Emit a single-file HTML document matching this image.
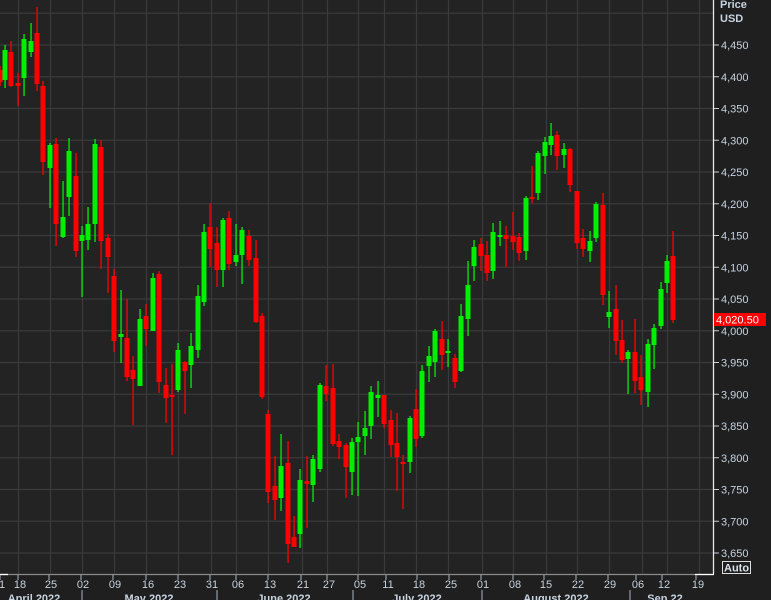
<!DOCTYPE html>
<html><head><meta charset="utf-8"><style>
html,body{margin:0;padding:0;background:#1f1f20;width:771px;height:600px;overflow:hidden;font-family:"Liberation Sans",sans-serif}
svg{display:block}
</style></head><body>
<svg id="s" width="771" height="600" xmlns="http://www.w3.org/2000/svg">
<rect x="0" y="0" width="713" height="574" fill="#232323"/>
<g id="grid"></g>
<g id="candles"></g>
<line x1="713.5" y1="0" x2="713.5" y2="574" stroke="#e8e8e8" stroke-width="1.3"/>
<line x1="0" y1="574.5" x2="713" y2="574.5" stroke="#8a8a8a" stroke-width="1.3"/>
<line x1="0" y1="574.5" x2="8" y2="574.5" stroke="#fff" stroke-width="1.3"/>
<line x1="695" y1="574.5" x2="714" y2="574.5" stroke="#fff" stroke-width="1.3"/>
<g id="axis" font-size="11" fill="#c6d2de"></g>
<text x="720" y="8" font-size="11" font-weight="bold" fill="#c6d2de">Price</text>
<text x="720" y="22" font-size="11" font-weight="bold" fill="#c6d2de">USD</text>
<rect x="714" y="313" width="52" height="13" fill="#ff0000"/>
<text x="716" y="323.5" font-size="11" fill="#fff">4,020.50</text>
<rect x="722.5" y="561.5" width="28" height="12" fill="none" stroke="#ddd" stroke-width="1"/>
<text x="724" y="571.5" font-size="11" font-weight="bold" fill="#d8e0e8">Auto</text>
</svg>
<script>
var NS="http://www.w3.org/2000/svg";
function el(p,t,a,txt){var e=document.createElementNS(NS,t);for(var k in a)e.setAttribute(k,a[k]);if(txt!=null)e.textContent=txt;p.appendChild(e);return e;}
var g=document.getElementById('grid'),ax=document.getElementById('axis'),cg=document.getElementById('candles');
var vx=[18,50,82,114,146,178,211,236,268,302,327,358,384,416,448,482,513,546,577,609,642,667,699];
vx.forEach(function(x){el(g,'line',{x1:x+.5,y1:0,x2:x+.5,y2:574,stroke:'#3a3a3a','stroke-width':1.2});});
var labs=['4,500','4,450','4,400','4,350','4,300','4,250','4,200','4,150','4,100','4,050','4,000','3,950','3,900','3,850','3,800','3,750','3,700','3,650'];
for(var k=-1;k<=16;k++){var y=45+k*31.75;el(g,'line',{x1:0,y1:y,x2:713,y2:y,stroke:'#3a3a3a','stroke-width':1.2});
 if(k>=0){el(ax,'line',{x1:714,y1:y,x2:719,y2:y,stroke:'#c6d2de'});el(ax,'text',{x:721,y:y+4},labs[k+1]);}}
var d=[[0,70,82,66,86,0],[5,50,80,45,88,1],[11,52,86,41,87,0],[18,83,86,73,106,0],[24,39,78,34,96,1],[31,41,52,23,57,1],[37,33,84,7,91,0],[43,86,162,81,175,0],[50,145,168,143,208,1],[56,144,224,138,246,0],[63,217,237,181,238,1],[69,151,197,138,216,1],[76,176,251,153,257,0],[82,235,241,226,297,1],[88,224,240,207,250,1],[95,144,224,139,242,1],[101,147,241,140,269,0],[108,238,257,234,293,0],[114,276,341,269,352,0],[121,334,337,290,363,1],[127,338,377,299,381,0],[133,370,379,356,425,0],[140,319,386,309,386,1],[146,316,329,304,346,0],[153,278,331,273,331,1],[159,274,382,271,393,0],[166,385,398,368,423,0],[172,395,397,364,455,0],[178,350,390,343,392,1],[185,362,371,361,414,0],[191,346,365,333,388,1],[198,296,350,285,358,1],[204,232,302,224,306,1],[210,227,249,203,267,0],[217,243,270,227,287,0],[223,220,270,218,287,1],[229,218,264,211,270,0],[236,255,262,224,266,1],[242,230,255,227,284,1],[249,236,260,230,266,0],[256,258,322,240,323,0],[262,316,397,313,399,0],[268,414,492,410,503,0],[275,486,500,456,520,0],[281,466,498,434,511,1],[288,463,544,441,563,0],[294,537,547,516,547,0],[300,480,534,469,548,1],[307,481,484,456,528,0],[313,459,485,455,502,1],[320,385,469,383,472,1],[326,386,394,365,401,0],[333,388,444,364,446,0],[339,441,447,434,459,0],[346,445,467,443,498,0],[352,442,472,438,495,1],[358,437,442,422,496,1],[365,428,436,411,455,1],[371,392,426,386,439,1],[378,395,398,381,417,1],[384,395,424,395,428,0],[391,420,445,410,457,0],[397,443,457,413,491,0],[403,462,464,455,509,0],[410,418,462,416,473,1],[416,409,439,389,447,0],[422,371,436,365,438,1],[429,356,366,346,382,1],[435,331,362,329,377,1],[442,339,355,321,370,0],[448,351,353,339,367,1],[455,358,382,354,388,0],[461,316,371,304,372,1],[468,285,319,261,336,1],[474,247,266,240,281,1],[481,244,256,238,271,0],[487,255,273,241,281,0],[493,232,271,223,279,1],[500,235,237,221,246,1],[506,235,239,226,267,0],[513,236,242,212,250,0],[519,237,253,233,261,0],[526,198,251,196,260,1],[532,197,199,166,203,0],[538,153,193,151,200,1],[545,142,156,137,174,1],[551,136,145,123,155,1],[557,135,156,131,170,0],[564,149,155,143,168,1],[570,149,185,148,192,0],[577,191,243,191,249,0],[583,238,249,229,257,0],[590,241,251,231,262,1],[596,204,238,202,242,1],[603,205,295,193,305,0],[609,312,317,291,328,1],[616,309,341,285,355,0],[622,340,360,320,363,0],[628,352,359,350,394,1],[635,352,381,319,393,0],[641,377,390,355,405,0],[648,344,392,339,407,1],[654,328,345,324,369,1],[661,289,326,282,329,1],[667,261,283,255,293,1],[673,256,320,231,323,0]];
d.forEach(function(c){var col=c[5]?'#00f000':'#ff0000';
 el(cg,'rect',{x:c[0]-0.6,y:c[3],width:1.3,height:c[4]-c[3],fill:col});
 el(cg,'rect',{x:c[0]-2.5,y:c[1],width:5,height:Math.max(2,c[2]-c[1]),fill:col});});
var t=[[2,'1'],[20,'18'],[51,'25'],[83,'02'],[115,'09'],[148,'16'],[180,'23'],[212,'31'],[238,'06'],[270,'13'],[303,'21'],[329,'27'],[360,'05'],[388,'11'],[419,'18'],[451,'25'],[483,'01'],[515,'08'],[546,'15'],[578,'22'],[610,'29'],[638,'06'],[664,'12'],[698,'19']];
t.forEach(function(a){el(ax,'line',{x1:a[0]-2,y1:575,x2:a[0]-2,y2:580,stroke:'#aab4be'});el(ax,'text',{x:a[0],y:588,'text-anchor':'middle'},a[1]);});
[82,217,353,482,630].forEach(function(x){el(ax,'line',{x1:x,y1:590,x2:x,y2:600,stroke:'#aab4be'});});
[[34,'April 2022'],[149,'May 2022'],[284,'June 2022'],[417,'July 2022'],[556,'August 2022'],[665,'Sep 22']].forEach(function(a){el(ax,'text',{x:a[0],y:602,'text-anchor':'middle','font-weight':'bold'},a[1]);});
</script>
</body></html>
